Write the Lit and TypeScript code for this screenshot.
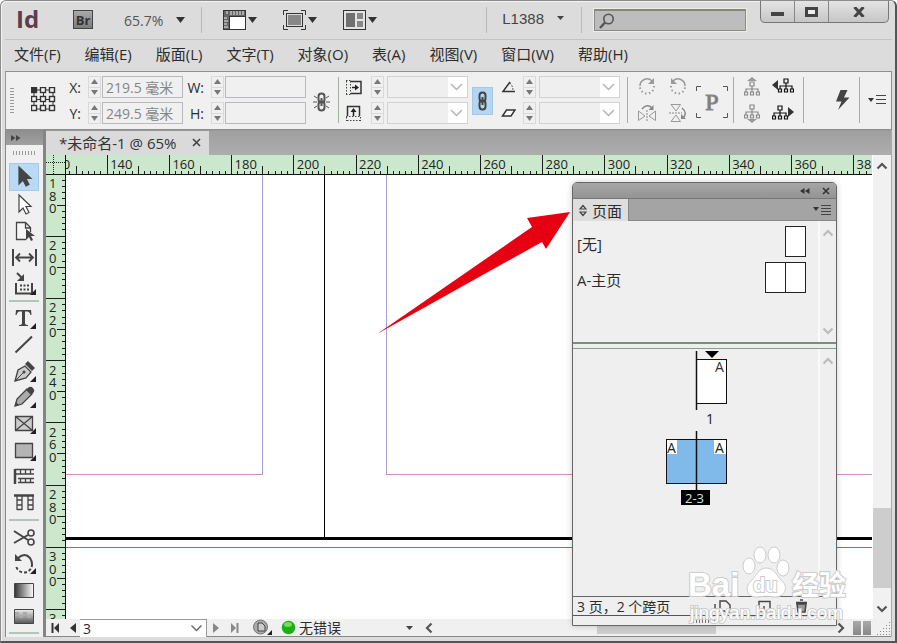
import { LitElement, html, svg, css, type TemplateResult } from "lit";
import { customElement, property, state } from "lit/decorators.js";

const icon = (w: number, h: number, body: TemplateResult) =>
  html`<svg width=${w} height=${h} viewBox="0 0 ${w} ${h}" aria-hidden="true">${body}</svg>`;

const triangle = html`<svg width="9" height="6" viewBox="0 0 9 6" aria-hidden="true"><path d="M0 0h9L4.5 6z" fill="#333" /></svg>`;
const smallTriangle = html`<svg width="7" height="4" viewBox="0 0 7 4" aria-hidden="true"><path d="M0 0h7L3.500 4z" fill="#444" /></svg>`;

const base = css`
  :host { box-sizing: border-box; font-family: "Open Sans", "Noto Sans CJK SC", sans-serif; font-size: 15px; color: #2c2c2c; }
  *, *::before, *::after { box-sizing: border-box; }
  button { appearance: none; border: 0; padding: 0; margin: 0; background: none; font: inherit; color: inherit; display: flex; align-items: center; justify-content: center; }
  input, select { appearance: none; border: 0; border-radius: 0; margin: 0; padding: 0; font: inherit; color: inherit; background: none; outline: 0; min-width: 0; }
  svg { display: block; flex: none; }
`;

const PX_PER_20MM = 62.2;
const PX_PER_2MM = PX_PER_20MM / 10;

@customElement("ruler-strip")
class RulerStrip extends LitElement {
  @property({ type: Boolean }) vertical = false;
  @property({ type: Number }) first = 0;
  @property({ type: Number }) origin = 0;
  @state() private length = 0;
  private observer = new ResizeObserver(([entry]) => {
    this.length = this.vertical ? entry.contentRect.height : entry.contentRect.width;
  });
  static styles = css`
    :host { display: block; overflow: hidden; background: #cbe8cd; min-width: 0; min-height: 0; }
    svg { display: block; width: 100%; height: 100%; }
    text { font-family: "Open Sans", sans-serif; font-size: 13px; fill: #222; }
    .tick { stroke: #1c1c1c; stroke-width: 1; shape-rendering: crispEdges; }
  `;
  connectedCallback() {
    super.connectedCallback();
    this.observer.observe(this);
  }
  disconnectedCallback() {
    super.disconnectedCallback();
    this.observer.disconnect();
  }
  render() {
    const count = Math.max(0, Math.ceil((this.length - this.origin) / PX_PER_20MM));
    const marks = Array.from({ length: count }, (_, i) => i);
    return html`<svg aria-hidden="true">${marks.map((i) => {
      const at = this.origin + i * PX_PER_20MM;
      const label = String(this.first + i * 20);
      const ticks = Array.from({ length: 10 }, (_, k) => {
        const p = at + k * PX_PER_2MM;
        const len = k === 0 ? 20 : k === 5 ? 8 : 3;
        return this.vertical
          ? svg`<line class="tick" x1=${19 - len} x2="19" y1=${p} y2=${p} />`
          : svg`<line class="tick" x1=${p} x2=${p} y1=${19 - len} y2="19" />`;
      });
      const digits = [...label].map((d, n) => ({ d, y: at + 14 + n * 12.5 })).filter(({ y }) => y - 10 < this.length);
      const text = this.vertical
        ? digits.map(({ d, y }) => svg`<text x="3" y=${y}>${d}</text>`)
        : svg`<text x=${at + 3} y="14">${label}</text>`;
      return svg`${ticks}${text}`;
    })}</svg>`;
  }
}

@customElement("title-bar")
class TitleBar extends LitElement {
  static styles = [base, css`
    :host { display: flex; height: 39px; padding-left: 11px; border-bottom: 1px solid #c4c4c4; font-size: 14px; color: #555; }
    .logo { width: 57px; font: bold 24px/35px "Open Sans", sans-serif; color: #5b3d4c; }
    .bridge { width: 20px; height: 19px; margin-top: 9px; border: 1px solid #444; background: linear-gradient(#aaa, #7c7c7c); font-size: 13px; font-weight: bold; line-height: 16px; color: #333; }
    .zoom { margin: 0 16px 0 31px; gap: 13px; height: 38px; }
    .rule { width: 1px; height: 26px; margin-top: 6px; background: #bbb; }
    .views { display: flex; margin-left: 21px; gap: 26px; height: 38px; }
    .views button { gap: 2px; }
    .space { flex: 1; }
    .workspace { margin: 0 17px 0 15px; gap: 13px; height: 34px; font: 15px "Liberation Sans", sans-serif; color: #444; }
    .search { display: flex; align-items: center; width: 152px; height: 22px; margin: 8px 14px 0 12px; padding-left: 4px; border: 1px solid #8b8b86; border-top: 2px solid #858580; background: #bdbdbd; outline: 1px solid #eeeee2; }
    .search input { flex: 1; }
    .controls { display: flex; height: 22px; margin-right: 3px; border: 1px solid #777; border-top: 0; border-radius: 0 0 5px 5px; background: linear-gradient(#e4e4e4, #c6c6c6); }
    .controls button { width: 34px; border-right: 1px solid #888; }
    .controls button:last-child { width: 59px; border-right: 0; }
  `];
  render() {
    return html`
      <span class="logo">Id</span>
      <button class="bridge" aria-label="Bridge">Br</button>
      <button class="zoom">65.7% ${triangle}</button>
      <span class="rule"></span>
      <div class="views">
        <button aria-label="视图选项">${icon(23, 20, svg`<rect x=".5" y=".5" width="22" height="19" fill="#fff" stroke="#333"/><path d="M1 1h21v5H7v13H1z" fill="#666"/><path d="M4 1v3M8 1v4M11 1v4M14 1v4M17 1v4M20 1v4M1 8h3M1 11h4M1 14h3M1 17h4" stroke="#eee"/><path d="M7 6.500h15M6.500 6v13" stroke="#333" fill="none"/>`)}${triangle}</button>
        <button aria-label="屏幕模式">${icon(23, 20, svg`<path d="M.5 5V.5H5M18 .5h4.500V5M22.500 15v4.500H18M5 19.500H.5V15" fill="none" stroke="#333"/><rect x="3.500" y="3.500" width="16" height="13" fill="#ddd" stroke="#333"/><rect x="5" y="5" width="13" height="10" fill="#888"/>`)}${triangle}</button>
        <button aria-label="排列文档">${icon(23, 20, svg`<rect x=".5" y=".5" width="22" height="19" fill="#e4e4e4" stroke="#333"/><path d="M3 3h9v14H3z" fill="#707070"/><path d="M14 3h6v6h-6zM14 11h6v6h-6z" fill="#888"/>`)}${triangle}</button>
      </div>
      <span class="space"></span>
      <span class="rule"></span>
      <button class="workspace">L1388 ${smallTriangle}</button>
      <span class="rule"></span>
      <label class="search">${icon(16, 16, svg`<circle cx="9.500" cy="6" r="4.700" fill="none" stroke="#555" stroke-width="1.600"/><path d="M6 9.500 1 15" stroke="#555" stroke-width="2.400"/>`)}<input aria-label="搜索" /></label>
      <div class="controls">
        <button aria-label="最小化">${icon(13, 10, svg`<rect y="5" width="13" height="4" fill="#444"/>`)}</button>
        <button aria-label="最大化">${icon(13, 10, svg`<rect x="1.500" y="1.500" width="10" height="7" fill="#eee" stroke="#444" stroke-width="3"/>`)}</button>
        <button aria-label="关闭">${icon(12, 10, svg`<path d="m1.500 0 9 10m0-10-9 10" stroke="#444" stroke-width="3"/>`)}</button>
      </div>`;
  }
}

@customElement("spin-buttons")
class SpinButtons extends LitElement {
  static styles = [base, css`
    :host { display: flex; flex-direction: column; width: 13px; height: 22px; border: 1px solid #dadada; }
    button { flex: 1; }
    button + button { border-top: 1px solid #dadada; }
  `];
  render() {
    return html`
      <button aria-label="增加">${icon(7, 5, svg`<path d="M0 5h7L3.500 0z" fill="#777"/>`)}</button>
      <button aria-label="减少">${icon(7, 5, svg`<path d="M0 0h7L3.500 5z" fill="#777"/>`)}</button>`;
  }
}

const tree = (color: string) => svg`<path d="M6 1h4v4H6zM8 5v3M2 11V8h12v3M8 8v3M.5 11h3v3h-3zM6.500 11h3v3h-3zM12.500 11h3v3h-3z" fill="none" stroke=${color} stroke-width="1.200"/>`;

@customElement("control-strip")
class ControlStrip extends LitElement {
  static styles = [base, css`
    :host { display: flex; height: 59px; padding: 4px 5px 0 4px; border: 1px solid #8f8f8f; border-left-color: #999; background: #f0f0f0; font-size: 14px; }
    .grip { width: 4px; height: 25px; margin-top: 12px; background: repeating-linear-gradient(#999 0 1px, transparent 1px 3px); }
    .reference { width: 25px; height: 25px; margin: 11px 9px 0 17px; }
    .fields { display: grid; grid-template: 22px 22px / 17px 18px 81px; gap: 4px 1px; align-content: start; align-items: center; }
    .fields label { justify-self: end; margin-right: 1px; }
    .fields spin-buttons { margin-left: 5px; }
    .fields.size { margin-left: 5px; }
    .fields input { height: 22px; border: 1px solid #b9b9bd; padding-left: 3px; color: #858585; }
    .chain { width: 17px; height: 20px; margin: 16px 8px 0 7px; }
    .rule { width: 1px; height: 46px; margin-top: 1px; background: #9fb3a5; }
    .combos { display: grid; gap: 4px 3px; align-content: start; align-items: center; }
    .combos spin-buttons { justify-self: end; }
    .scale { grid-template: 22px 22px / 17px 19px 81px; margin-left: 6px; }
    .angle { grid-template: 22px 22px / 15px 17px 81px; margin: 0 7px 0 8px; }
    .combo { display: grid; height: 22px; border: 1px solid #d3d3d3; background: linear-gradient(90deg, #efefef 60px, #fff 60px); }
    .combo select, .combo svg { grid-area: 1 / 1; }
    .combo svg { justify-self: end; align-self: center; margin-right: 4px; pointer-events: none; }
    .link { width: 21px; height: 28px; margin: 11px 0 0 4px; background: #b5d6f3; border: 1px solid #a3c9ea; }
    .turns { display: grid; grid-template: 20px 20px / 18px 18px; gap: 7px 13px; margin: 0 9px 0 10px; align-content: start; }
    .para { display: grid; place-items: center; width: 32px; height: 32px; margin: 10px 5px 0 0; font: 24px/30px "Liberation Serif", serif; color: #777; -webkit-text-stroke: 1px #888; }
    .para svg, .para span { grid-area: 1 / 1; }
    .trees { display: grid; grid-template: 20px 20px / 16px 22px; gap: 7px 12px; margin: 0 9px 0 10px; align-content: start; }
    .space { flex: 1; }
    .bolt { width: 15px; height: 22px; margin: 13px 9px 0 0; }
    .menu { width: 18px; height: 14px; margin: 17px 0 0 8px; }
  `];
  private combo(name: string) {
    return html`<spin-buttons></spin-buttons><div class="combo"><select aria-label=${name}><option></option></select>${icon(13, 8, svg`<path d="m1 1 5.500 5.500L12 1" fill="none" stroke="#b5b5b5" stroke-width="1.500"/>`)}</div>`;
  }
  render() {
    const links = (c: string) => svg`<rect x="5.500" y="1.500" width="6" height="9" rx="3" fill="none" stroke=${c} stroke-width="2"/><rect x="5.500" y="9.500" width="6" height="9" rx="3" fill="none" stroke=${c} stroke-width="2"/><path d="M8.500 6v8" stroke=${c} stroke-width="2"/>`;
    const turn = svg`<path d="M2 9a7 7 0 0 1 12-5" fill="none" stroke="#999" stroke-width="1.500"/><path d="M16 1v6h-6z" fill="#999"/><path d="M16 9a7 7 0 0 1-14 1" fill="none" stroke="#999" stroke-width="2" stroke-dasharray="1.500 2.500"/>`;
    return html`
      <span class="grip"></span>
      <button class="reference" aria-label="参考点">${icon(25, 25, svg`<path d="M3 3h19v19H3zM3 12.500h19M12.500 3v19" fill="none" stroke="#333"/>${[0, 1, 2, 3, 4, 5, 6, 7, 8].map((n) => svg`<rect x=${0.5 + (n % 3) * 9} y=${0.5 + Math.floor(n / 3) * 9} width="5" height="5" fill=${n ? "#f4f4f4" : "#333"} stroke="#333" stroke-width="1.400"/>`)}`)}</button>
      <div class="fields">
        <label for="x">X:</label><spin-buttons></spin-buttons><input id="x" value="219.5 毫米" />
        <label for="y">Y:</label><spin-buttons></spin-buttons><input id="y" value="249.5 毫米" />
      </div>
      <div class="fields size">
        <label for="w">W:</label><spin-buttons></spin-buttons><input id="w" />
        <label for="h">H:</label><spin-buttons></spin-buttons><input id="h" />
      </div>
      <button class="chain" aria-label="约束宽高">${icon(17, 20, svg`${links("#555")}<path d="m1 4 3 2m12-2-3 2M0 10h4m9 0h4M1 16l3-2m12 2-3-2" stroke="#555"/>`)}</button>
      <span class="rule"></span>
      <div class="combos scale">
        ${icon(17, 17, svg`<path d="M6 2.500h10v12H6" fill="none" stroke="#333" stroke-width="1.500"/><path d="M1 1.500h5M1 15.500h5M1.500 2v13M5.500 2v13" stroke="#444" stroke-dasharray="1.500 1.500"/><path d="M7 8.500h4" stroke="#222" stroke-width="1.500"/><path d="M10 5.500v6l4-3z" fill="#222"/>`)}
        ${this.combo("X 缩放")}
        ${icon(17, 17, svg`<path d="M2.500 11V1.500h12V11" fill="none" stroke="#333" stroke-width="1.500"/><path d="M1 11.500h15M2 15.500h14M1.500 12v4M15.500 12v4" stroke="#444" stroke-dasharray="1.500 1.500"/><path d="M8.500 5v6" stroke="#222" stroke-width="1.500"/><path d="M5.500 7h6l-3-4z" fill="#222"/>`)}
        ${this.combo("Y 缩放")}
      </div>
      <button class="link" aria-label="约束缩放比例">${icon(17, 20, links("#444"))}</button>
      <div class="combos angle">
        ${icon(15, 12, svg`<path d="M9 1 2 10.500h12" fill="none" stroke="#333" stroke-width="1.500"/><path d="M9 2q3 3 3 8" fill="none" stroke="#333" stroke-dasharray="1.500 1.500"/>`)}
        ${this.combo("旋转角度")}
        ${icon(15, 12, svg`<path d="M5.500 3H14l-4 6H1.500z" fill="#fff" stroke="#333" stroke-width="1.500"/>`)}
        ${this.combo("切变角度")}
      </div>
      <span class="rule"></span>
      <div class="turns">
        <button aria-label="顺时针旋转">${icon(18, 18, turn)}</button>
        <button aria-label="逆时针旋转">${icon(18, 18, svg`<g transform="matrix(-1 0 0 1 18 0)">${turn}</g>`)}</button>
        <button aria-label="水平翻转">${icon(18, 18, svg`<path d="M.5 7v9.500L7 12zM17.500 7v9.500L11 12z" fill="none" stroke="#999"/><path d="M9 6v12" stroke="#888" stroke-dasharray="2 1"/><path d="M4 5q5-6 10-1" fill="none" stroke="#888" stroke-width="1.500"/><path d="M15.500 1v5h-5z" fill="#888"/>`)}</button>
        <button aria-label="垂直翻转">${icon(18, 18, svg`<path d="M2 .5h9.500L7 7zM2 17.500h9.500L7 11z" fill="none" stroke="#999"/><path d="M0 9h13" stroke="#888" stroke-dasharray="2 1"/><path d="M13 4q6 5 1 10" fill="none" stroke="#888" stroke-width="1.500"/><path d="M17 15h-5v-5z" fill="#888"/>`)}</button>
      </div>
      <div class="para">${icon(32, 32, svg`<path d="M.5 5V.5H5M27 .5h4.500V5M31.500 27v4.500H27M5 31.500H.5V27" fill="none" stroke="#555"/>`)}<span>P</span></div>
      <span class="rule"></span>
      <div class="trees">
        <button aria-label="选择容器">${icon(16, 19, svg`<path d="M3 4h10L8 0z" fill="#999"/><g transform="translate(0 4)">${tree("#888")}</g>`)}</button>
        <button aria-label="选择上一对象">${icon(22, 18, svg`<path d="M6 3v10L0 8z" fill="#333"/><g transform="translate(6 1)">${tree("#111")}</g>`)}</button>
        <button aria-label="选择内容">${icon(16, 19, svg`<path d="M3 15h10l-5 4z" fill="#999"/>${tree("#888")}`)}</button>
        <button aria-label="选择下一对象">${icon(22, 18, svg`<path d="M16 3v10l6-5z" fill="#333"/><g transform="translate(0 1)">${tree("#111")}</g>`)}</button>
      </div>
      <span class="rule"></span>
      <span class="space"></span>
      <button class="bolt" aria-label="快速应用">${icon(15, 22, svg`<path d="M5.500 1h7L9 8.500h5.500L3 21l3.500-8.500H1z" fill="#444"/>`)}</button>
      <span class="rule"></span>
      <button class="menu" aria-label="面板菜单">${icon(18, 14, svg`<path d="M0 5h6L3 9z" fill="#333"/><path d="M8 2.500h10M8 6.500h10M8 10.500h10" stroke="#444"/>`)}</button>`;
  }
}

const corner = svg`<path d="M24 17v6h-6z" fill="#222"/>`;
const arrow = (fill: string) => svg`<path d="M7 2v17l4-4 3 6 3-1.500-3-6h5z" fill=${fill} stroke="#444" stroke-width="1.200"/>`;
const TOOLS: Array<Array<[string, TemplateResult]>> = [
  [
    ["选择", arrow("#444")],
    ["直接选择", arrow("#fff")],
    ["页面", svg`<path d="M14 20.500H4.500v-17h9l5 5V13M13.500 3.500v5.500h5" fill="#f6f6f6" stroke="#444" stroke-width="1.300"/><path d="M14 10v11l3-3 2 4 2-1-2-4h4z" fill="#444"/>`],
    ["间隙", svg`<path d="M1 4v17M24 4v17" stroke="#444" stroke-width="2"/><path d="M4 12.500h17M8 8.500l-4 4 4 4M17 8.500l4 4-4 4" fill="none" stroke="#444" stroke-width="1.800"/>`],
    ["内容收集器", svg`<path d="M4 11v10.500h16V11" fill="none" stroke="#444" stroke-width="2"/><path d="M8 13.500h9M8 17.500h9" stroke="#444" stroke-width="2" stroke-dasharray="2 1.500"/><path d="m5 1 5 5" stroke="#444" stroke-width="2"/><path d="M12 2v7H5z" fill="#444"/>${corner}`],
  ],
  [
    ["文字", svg`<path d="M4 4h15l.5 5h-1q-1-3.500-3-3.500h-2.500V17q0 2 3 2v1h-9v-1q3 0 3-2V5.500H7.500q-2 0-3 3.500h-1z" fill="#444"/>${corner}`],
    ["直线", svg`<path d="M3.500 20.500 20 4.500" stroke="#444" stroke-width="2"/>`],
    ["钢笔", svg`<path d="M3 22 6 11l7-4 6 6-5 6z" fill="#ccc" stroke="#444" stroke-width="1.300"/><path d="m3 22 8-8" stroke="#444"/><circle cx="12" cy="13" r="1.500" fill="#444"/><path d="m13 5 3-3 7 7-3 3z" fill="#444"/>${corner}`],
    ["铅笔", svg`<path d="m3 21 2-7L15 4l5 5L10 19z" fill="#aaa" stroke="#444" stroke-width="1.300"/><path d="m14 5 3-3q2-1 4 1t1 4l-3 3z" fill="#444"/><path d="m3 21 1-4 3 3z" fill="#444"/>${corner}`],
    ["矩形框架", svg`<path d="M3.500 5.500h17v14h-17zM3.500 5.500l17 14m0-14-17 14" fill="#ccc" stroke="#444" stroke-width="1.300"/>${corner}`],
    ["矩形", svg`<path d="M3.500 5.500h17v14h-17z" fill="#b4b4b4" stroke="#444" stroke-width="1.300"/>${corner}`],
    ["水平网格", svg`<path d="M3 5v15" stroke="#444" stroke-width="2.500"/><path d="M3 5.500h19M3 10h19M6 14.500h16M6 18.500h16M8.500 5.500V10M13.500 5.500V10M18.500 5.500V10M8.500 14v5M13.500 14v5M18.500 14v5" stroke="#444" stroke-width="1.300"/>`],
    ["垂直网格", svg`<path d="M2 5.500h20" stroke="#444" stroke-width="2.500"/><path d="M5 5v15M10 5v15M16 5v15M21 5v15M5 10h5M5 15h5M16 10h5M16 15h5M5 19.500h5M16 19.500h5" stroke="#444" stroke-width="1.300"/>`],
  ],
  [
    ["剪刀", svg`<path d="m2 6 14 9M2 18l14-8" stroke="#444" stroke-width="2"/><circle cx="19" cy="8" r="3" fill="none" stroke="#444" stroke-width="1.600"/><circle cx="19" cy="17" r="3" fill="none" stroke="#444" stroke-width="1.600"/>`],
    ["自由变换", svg`<path d="M6 7q7-6 12 0 2 3 2 6" fill="none" stroke="#444" stroke-width="2"/><path d="M3 3v7h7z" fill="#444"/><path d="M20 13a8 8 0 0 1-16 1" fill="none" stroke="#444" stroke-width="2" stroke-dasharray="3 2"/>${corner}`],
    ["渐变色板", svg`<defs><linearGradient id="g"><stop stop-color="#333"/><stop offset="1" stop-color="#fff"/></linearGradient></defs><path d="M2.500 5.500h19v14h-19z" fill="url(#g)" stroke="#444"/>`],
    ["渐变羽化", svg`<defs><linearGradient id="f" x2="0" y2="1"><stop stop-color="#eee"/><stop offset="1" stop-color="#555"/></linearGradient></defs><path d="M2.500 5.500h19v14h-19z" fill="url(#f)" stroke="#444"/><path d="M3 8h4v3H3zM11 8h4v3h-4zM7 11h4v3H7zM15 11h4v3h-4z" fill="#aaa"/>`],
  ],
];

@customElement("tool-panel")
class ToolPanel extends LitElement {
  static styles = [base, css`
    :host { display: flex; flex-direction: column; width: 38px; background: #f0f0f0; border-left: 1px solid #888; }
    .head { justify-content: flex-start; height: 15px; padding-left: 5px; background: linear-gradient(#8e8e8e, #a0a0a0); }
    .grip { align-self: center; width: 24px; height: 4px; margin: 6px 0 8px; background: repeating-linear-gradient(90deg, #999 0 1px, transparent 1px 3px); }
    .tool { flex: 1; margin: 0 4px 0 3px; min-height: 20px; }
    .active { background: #b9d9f5; border: 1px solid #a5cbec; }
    hr { width: 30px; height: 2px; margin: 3px 0 3px 3px; border: 0; background: #b5c4b8; }
  `];
  render() {
    return html`
      <button class="head" aria-label="展开面板">${icon(10, 6, svg`<path d="M0 0v6l4.500-3zM5 0v6l4.500-3z" fill="#444"/>`)}</button>
      <span class="grip"></span>
      ${TOOLS.map((group, g) => html`${group.map(([name, art], i) => html`<button class="tool ${g + i === 0 ? "active" : ""}" aria-label=${name}>${icon(25, 24, art)}</button>`)}<hr />`)}`;
  }
}

const chevron = (d: string, color: string) => icon(12, 12, svg`<path d=${d} fill="none" stroke=${color} stroke-width="2.200"/>`);
const UP = "m1.500 8.500 4.500-4.500 4.500 4.500";
const DOWN = "m1.500 3.500 4.500 4.500 4.500-4.500";

@customElement("pages-panel")
class PagesPanel extends LitElement {
  static styles = [base, css`
    :host { display: flex; flex-direction: column; border: 1px solid #666; border-radius: 5px 5px 0 0; background: #efefef; font-size: 14px; overflow: hidden; box-shadow: 0 0 6px #0003; }
    .head { display: flex; justify-content: flex-end; align-items: center; gap: 12px; height: 16px; padding-right: 6px; background: linear-gradient(#a6a6a6, #949494); border-bottom: 1px solid #777; }
    .tabs { display: flex; align-items: stretch; height: 22px; background: #a4a4a4; border-bottom: 1px solid #888; }
    .tab { gap: 5px; width: 56px; background: #dedede; border-right: 1px solid #888; height: 22px; font-size: 15px; }
    .more { margin: 0 5px 0 auto; }
    .section { display: flex; }
    .masters { height: 123px; border-bottom: 2px solid #7d8b82; }
    .list { flex: 1; padding: 2px 12px 0 4px; font-size: 15px; }
    .master { display: flex; align-items: center; justify-content: space-between; height: 36px; }
    .master span:first-child { padding-top: 4px; }
    .sheets { display: flex; border: 1px solid #222; background: #fff; height: 31px; }
    .sheets i { width: 19px; }
    .sheets i + i { width: 20px; border-left: 1px solid #222; }
    .scroll { display: flex; flex-direction: column; justify-content: space-between; align-items: center; width: 18px; padding: 6px 0 5px; border-left: 2px solid #fafafa; }
    .split { height: 5px; background: #e9efeb; border-bottom: 1px solid #8d9a92; }
    .pages { flex: 1; min-height: 0; }
    .spreads { flex: 1; display: flex; flex-direction: column; align-items: center; padding: 2px 0 0 2px; }
    .foot { display: flex; align-items: center; gap: 24px; height: 20px; padding: 0 4px; border-top: 1px solid #666; border-bottom: 1px solid #555; }
    .foot span { margin-right: auto; white-space: nowrap; }
    .grip { align-self: center; width: 24px; height: 5px; margin: 2px 0; background: repeating-linear-gradient(90deg, #777 0 1px, transparent 1px 3px); }
    text { font-family: "Open Sans", sans-serif; }
  `];
  render() {
    return html`
      <div class="head">
        <button aria-label="折叠">${icon(10, 6, svg`<path d="M4.500 0v6L0 3zM9.500 0v6L5 3z" fill="#333"/>`)}</button>
        <button aria-label="关闭">${icon(8, 8, svg`<path d="m1 1 6 6m0-6-6 6" stroke="#333" stroke-width="1.600"/>`)}</button>
      </div>
      <div class="tabs">
        <button class="tab">${icon(8, 13, svg`<path d="M1 5 4 1.500 7 5zM1 8l3 3.500L7 8z" fill="none" stroke="#444" stroke-width="1.200"/>`)}页面</button>
        <button class="more" aria-label="面板菜单">${icon(18, 12, svg`<path d="M0 3h6L3 7z" fill="#333"/><path d="M8 1.500h10M8 4.500h10M8 7.500h10M8 10.500h10" stroke="#444"/>`)}</button>
      </div>
      <div class="section masters">
        <div class="list">
          <div class="master"><span>[无]</span><span class="sheets"><i></i></span></div>
          <div class="master"><span>A-主页</span><span class="sheets"><i></i><i></i></span></div>
        </div>
        <div class="scroll">${chevron(UP, "#bbb")}${chevron(DOWN, "#bbb")}</div>
      </div>
      <div class="split"></div>
      <div class="section pages">
        <div class="spreads">
          <svg width="62" height="156" viewBox="0 0 62 156">
            <path d="M39 0h14l-7 7z" fill="#000"/>
            <rect x="30.500" y="8.500" width="30" height="44" fill="#fff" stroke="#111"/>
            <path d="M30.500 0v59" stroke="#111" stroke-width="1.500"/>
            <text x="49" y="21" font-size="14" fill="#333">A</text>
            <text x="40" y="73" font-size="14" fill="#222">1</text>
            <rect x=".5" y="88.500" width="60" height="44" fill="#7fbaea" stroke="#111"/>
            <path d="M1 89h10v14H1zM48 89h12v14H48z" fill="#fff"/>
            <path d="M30.500 80v59" stroke="#111" stroke-width="1.500"/>
            <text x="1" y="102" font-size="14" fill="#222">A</text>
            <text x="49" y="102" font-size="14" fill="#222">A</text>
            <rect x="15" y="139" width="29" height="15" fill="#000"/>
            <text x="19" y="152" font-size="13" fill="#d8e6d2">2-3</text>
          </svg>
        </div>
        <div class="scroll">${chevron(UP, "#bbb")}</div>
      </div>
      <div class="foot">
        <span>3 页，2 个跨页</span>
        <button aria-label="编辑页面大小">${icon(20, 14, svg`<path d="M1 5v7h10M6 9V2h6l4 4v7h-5" fill="none" stroke="#444" stroke-width="1.400"/><path d="M17 11h2v2h-2z" fill="#222"/>`)}</button>
        <button aria-label="新建页面">${icon(13, 14, svg`<path d="M1 2.500h11v10H1zM6 7v5H1" fill="#eee" stroke="#444" stroke-width="1.400"/>`)}</button>
        <button aria-label="删除">${icon(13, 14, svg`<path d="M2 5h9l-1 8H3zM1 3.500h11M5 1h3" fill="#999" stroke="#444" stroke-width="1.500"/>`)}</button>
        <i></i>
      </div>
      <span class="grip"></span>`;
  }
}

@customElement("document-pane")
class DocumentPane extends LitElement {
  static styles = [base, css`
    :host { display: flex; flex-direction: column; position: relative; flex: 1; min-width: 0; border-right: 1px solid #aaa; }
    .tabs { display: flex; height: 25px; background: linear-gradient(#a0a0a0, #adadad); border-top: 1px solid #999; }
    .tab { display: flex; align-items: center; justify-content: space-between; width: 163px; padding: 0 8px 2px 13px; background: #dadada; color: #333; white-space: nowrap; }
    .work { flex: 1; min-height: 0; display: grid; grid-template: 20px minmax(0, 1fr) / 20px minmax(0, 1fr) 19px; }
    .corner, .top { border-bottom: 1px solid #111; }
    .corner, .left { border-right: 1px solid #111; }
    .corner { background: #cbe8cd; }
    .canvas { display: block; width: 100%; height: 100%; background: #fff; min-height: 0; overflow: hidden; }
    .scroll { grid-area: 1 / 3 / 3 / 4; display: flex; flex-direction: column; align-items: center; padding: 5px 0 4px; background: #f1f1f1; border-left: 1px solid #fff; }
    .scroll .thumb { width: 100%; height: 80px; margin: auto 0 15px; background: #cdcdcd; }
    .status { display: flex; align-items: center; height: 18px; background: #f0f0f0; border-bottom: 1px solid #888; font-size: 14px; line-height: 17px; }
    .nav { width: 18px; height: 17px; }
    .page { display: grid; width: 127px; height: 18px; margin-left: -2px; background: #fff; border: 1px solid #999; border-width: 1px 1px 0 0; align-items: center; }
    .page select, .page svg { grid-area: 1 / 1; }
    .page select { padding-left: 3px; line-height: 17px; }
    .page svg { justify-self: end; margin-right: 4px; pointer-events: none; }
    .flight { gap: 4px; margin-left: 10px; white-space: nowrap; }
    .errors { width: 132px; height: 17px; gap: 3px; margin-left: 9px; justify-content: flex-start; white-space: nowrap; }
    .errors svg:last-child { margin-left: auto; }
    .hbar { flex: 1; display: flex; align-items: center; height: 17px; padding-left: 10px; }
    .hbar .thumb { width: 119px; height: 12px; margin: 0 auto 0 162px; background: #cdcdcd; }
    .columns { display: flex; gap: 2px; margin: 0 6px; }
    .columns i { width: 8px; height: 14px; background: linear-gradient(#aaa, #888); }
    pages-panel { position: absolute; right: 54px; top: 52px; bottom: 11px; width: 265px; }
  `];
  render() {
    const first = svg`<path d="M1.500 0v10" stroke="#333" stroke-width="2"/><path d="M8 0v10L3 5z" fill="#333"/>`;
    return html`
      <div class="tabs"><div class="tab">*未命名-1 @ 65%<button aria-label="关闭文档">${icon(9, 9, svg`<path d="m1 1 7 7m0-7-7 7" stroke="#444" stroke-width="1.600"/>`)}</button></div></div>
      <div class="work">
        <div class="corner">${icon(19, 19, svg`<path d="M7.500 0v19M0 7.500h19" stroke="#222" stroke-dasharray="1 1"/>`)}</div>
        <ruler-strip class="top" first="120" origin="-21"></ruler-strip>
        <ruler-strip class="left" vertical first="180" origin="-1"></ruler-strip>
        <svg class="canvas" aria-hidden="true">
          <g shape-rendering="crispEdges">
            <line x1="196.500" x2="196.500" y1="0" y2="300" stroke="#a9a0d8"/>
            <line x1="320.500" x2="320.500" y1="0" y2="300" stroke="#a9a0d8"/>
            <line x1="0" x2="197" y1="299.500" y2="299.500" stroke="#d58bbd"/>
            <line x1="320" x2="100%" y1="299.500" y2="299.500" stroke="#d58bbd"/>
            <line x1="258.500" x2="258.500" y1="0" y2="362" stroke="#000"/>
            <line x1="0" x2="100%" y1="363.500" y2="363.500" stroke="#000" stroke-width="3"/>
            <rect x="0" y="372" width="100%" height="1" fill="#f0405c"/>
          </g>
          <path d="M311 159 466 52 461 43 504 37 480 74 476 67Z" fill="#e60012"/>
        </svg>
        <div class="scroll"><button aria-label="向上滚动">${chevron(UP, "#555")}</button><span class="thumb"></span><button aria-label="向下滚动">${chevron(DOWN, "#555")}</button></div>
      </div>
      <div class="status">
        <button class="nav" aria-label="首页">${icon(9, 10, first)}</button>
        <button class="nav" aria-label="上一页">${icon(6, 10, svg`<path d="M6 0v10L0 5z" fill="#333"/>`)}</button>
        <div class="page"><select aria-label="页码"><option>3</option></select>${icon(11, 8, svg`<path d="m.5 1.500 5 5 5-5" fill="none" stroke="#666" stroke-width="1.400"/>`)}</div>
        <button class="nav" aria-label="下一页">${icon(6, 10, svg`<path d="M0 0v10l6-5z" fill="#888"/>`)}</button>
        <button class="nav" aria-label="末页">${icon(9, 10, svg`<path d="M7.500 0v10" stroke="#888" stroke-width="2"/><path d="M1 0v10l5-5z" fill="#888"/>`)}</button>
        <button class="flight" aria-label="打开">${icon(19, 17, svg`<circle cx="7.500" cy="8" r="7" fill="#aaa" stroke="#777"/><path d="M5 12V4h4l3 3v5z" fill="#ccc" stroke="#444"/><path d="M19 11v5h-5z" fill="#222"/>`)}</button>
        <button class="errors">${icon(15, 15, svg`<circle cx="7.500" cy="7.500" r="6.800" fill="#1fae16"/><ellipse cx="7" cy="4.500" rx="4" ry="2.500" fill="#6fe05c"/>`)}无错误${smallTriangle}</button>
        <div class="hbar"><button aria-label="向左滚动">${chevron("m8.500 1.500-4.500 4.500 4.500 4.500", "#555")}</button><span class="thumb"></span><button aria-label="向右滚动">${chevron("m3.500 1.500 4.500 4.500-4.500 4.500", "#555")}</button></div>
        <span class="columns"><i></i><i></i></span>
        ${icon(14, 14, svg`${[0, 1, 2, 3, 4].map((r) => svg`<path d="M${12 - r * 3} ${r * 3 + 1.5}H14" stroke="#888" stroke-dasharray="1 2"/>`)}`)}
      </div>
      <pages-panel></pages-panel>`;
  }
}

const MENUS = ["文件(F)", "编辑(E)", "版面(L)", "文字(T)", "对象(O)", "表(A)", "视图(V)", "窗口(W)", "帮助(H)"];

@customElement("app-root")
class AppRoot extends LitElement {
  static styles = [base, css`
    :host { display: flex; flex-direction: column; position: relative; height: 100vh; min-height: 480px; padding: 0 3px 4px 4px; background: #dcdcdc; border: 1px solid #8c8c8c; border-width: 1px 2px 2px 1px; border-right-color: #555; border-bottom-color: #555; border-radius: 6px 6px 0 0; box-shadow: inset 1px 1px #f4f4f4; overflow: hidden; }
    nav { display: flex; gap: 24px; height: 31px; padding-left: 9px; }
    nav button { white-space: nowrap; height: 26px; }
    main { display: flex; flex: 1; min-height: 0; }
    .gutter { width: 3px; background: #858585; }
    .mark { position: absolute; right: 43px; bottom: 14px; pointer-events: none; }
    .mark text { fill: #fff; stroke: #ccc; stroke-width: 2; paint-order: stroke; font-family: "Liberation Sans", "Noto Sans CJK SC", sans-serif; }
  `];
  render() {
    return html`
      <title-bar></title-bar>
      <nav>${MENUS.map((m) => html`<button>${m}</button>`)}</nav>
      <control-strip></control-strip>
      <main><tool-panel></tool-panel><span class="gutter"></span><document-pane></document-pane></main>
      <svg class="mark" width="164" height="82" viewBox="0 0 164 82" aria-hidden="true">
        <text x="0" y="51" font-size="33" font-weight="bold">Bai</text>
        <g fill="#fff" stroke="#ccc"><ellipse cx="61" cy="21" rx="6" ry="8"/><ellipse cx="72" cy="10" rx="6" ry="8"/><ellipse cx="86" cy="10" rx="6" ry="8"/><ellipse cx="95" cy="23" rx="6" ry="8"/><path d="M78 23c9 0 11 9 17 14 6 7 0 16-9 15-5-1-11-1-16 0-10 1-14-8-8-15 6-5 8-14 16-14z"/></g>
        <text x="65" y="47" font-size="20" font-weight="bold">du</text>
        <text x="104" y="50" font-size="27" font-weight="bold">经验</text>
        <text x="2" y="74" font-size="19">jingyan.baidu.com</text>
      </svg>`;
  }
}
